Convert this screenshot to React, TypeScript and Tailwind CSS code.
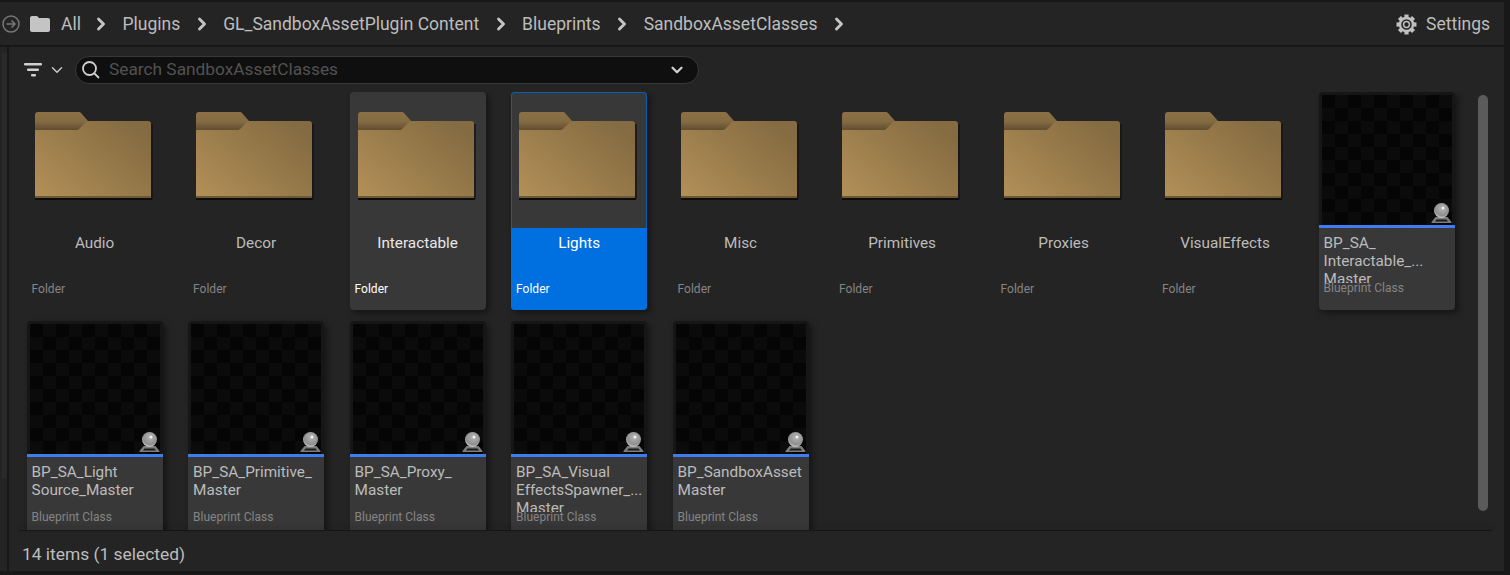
import { useId } from "react"
import { ChevronDown, ChevronRight } from "lucide-react"

const crumbs = ["Plugins", "GL_SandboxAssetPlugin Content", "Blueprints", "SandboxAssetClasses"]
const folders = ["Audio", "Decor", "Interactable", "Lights", "Misc", "Primitives", "Proxies", "VisualEffects"]
const blueprints = [
  ["BP_SA_", "Interactable_...", "Master"],
  ["BP_SA_Light", "Source_Master"],
  ["BP_SA_Primitive_", "Master"],
  ["BP_SA_Proxy_", "Master"],
  ["BP_SA_Visual", "EffectsSpawner_...", "Master"],
  ["BP_SandboxAsset", "Master"],
]

function FolderArt() {
  const id = useId()
  return (
    <svg width="118" height="89" viewBox="0 0 118 89" className="block">
      <defs>
        <linearGradient id={id} x1="0" y1="1" x2="1" y2="0.25">
          <stop offset="0" stopColor="#b39058" />
          <stop offset="1" stopColor="#846b41" />
        </linearGradient>
        <linearGradient id={id + "t"} x1="0" y1="0" x2="0" y2="1">
          <stop offset="0" stopColor="#8c7146" />
          <stop offset="0.5" stopColor="#846b42" />
          <stop offset="1" stopColor="#5c4a2e" />
        </linearGradient>
      </defs>
      <path d="M0 19V3a3 3 0 0 1 3-3h41a3 3 0 0 1 2 1l7 8-9 10z" fill={`url(#${id}t)`} />
      <path d="M0 18h42a3 3 0 0 0 2-1l7-7a3 3 0 0 1 2-1h60a3 3 0 0 1 3 3v74H0z" fill={`url(#${id})`} />
      <path d="M0 84h116v2H0z" fill="#6f5934" />
      <path d="M0 87h117" stroke="#0c0c0c" strokeWidth="2" />
      <path d="M117 12v75" stroke="#141414" strokeWidth="1.500" />
    </svg>
  )
}

function LightIcon() {
  return (
    <svg width="21" height="21" viewBox="0 0 21 21" className="block">
      <defs>
        <radialGradient id="sphere" cx="0.55" cy="0.35" r="0.7">
          <stop offset="0" stopColor="#b5b5b5" />
          <stop offset="0.7" stopColor="#8f8f8f" />
          <stop offset="1" stopColor="#dedede" />
        </radialGradient>
      </defs>
      <path d="M4.500 15L0.500 20v1h20v-1l-4-5z" fill="#7d7d7d" />
      <path d="M5.500 17.500h10l1.500 2H4z" fill="#1a1a1a" />
      <circle cx="10.500" cy="8.500" r="7.500" fill="url(#sphere)" />
      <circle cx="12" cy="6" r="1.500" fill="#f2f2f2" />
    </svg>
  )
}

function GearIcon() {
  return (
    <svg width="21" height="21" viewBox="0 0 20 20" className="block text-[#c0c0c0]" fill="none" stroke="currentColor">
      {[0, 45, 90, 135, 180, 225, 270, 315].map((a) => (
        <rect key={a} x="8" y="0.500" width="4" height="4" fill="currentColor" stroke="none" transform={`rotate(${a} 10 10)`} />
      ))}
      <circle cx="10" cy="10" r="6.200" strokeWidth="2.400" />
      <circle cx="10" cy="10" r="2.800" strokeWidth="1.400" />
    </svg>
  )
}

function FolderCard({ name }: { name: string }) {
  const hovered = name === "Interactable"
  const selected = name === "Lights"
  const active = hovered || selected
  return (
    <div className={`relative h-[218px] w-[136px] rounded-[4px] ${active ? "bg-[#383838] shadow-[3px_3px_6px_rgba(0,0,0,0.45)]" : ""} ${selected ? "ring-1 ring-inset ring-[#0a5fb4]" : ""}`}>
      <div className="h-[136px] pt-[20px] pl-[8px]">
        <FolderArt />
      </div>
      <div className={`absolute inset-x-0 bottom-0 h-[82px] rounded-b-[4px] ${selected ? "bg-[#006fe0]" : ""}`}>
        <div className={`pt-[6px] text-center text-[15.300px] leading-[18px] ${selected ? "text-white" : active ? "text-[#e8e8e8]" : "text-[#bcbcbc]"}`}>{name}</div>
        <div className={`absolute bottom-[14px] left-[5px] text-[12px] leading-[14px] ${active ? "text-white" : "text-[#858585]"}`}>Folder</div>
      </div>
    </div>
  )
}

function BlueprintCard({ lines }: { lines: string[] }) {
  return (
    <div className="h-[218px] w-[136px] rounded-[4px] bg-[#161616] shadow-[3px_3px_6px_rgba(0,0,0,0.45)]">
      <div className="px-[3px] pt-[3px]">
        <div className="relative h-[130px] bg-[#050505] bg-[repeating-conic-gradient(#0b0b0b_0_25%,#050505_0_50%)] bg-[length:26px_26px]">
          <div className="absolute right-0 bottom-[2px]">
            <LightIcon />
          </div>
        </div>
      </div>
      <div className="h-[3px] bg-[#3f7cf0]" />
      <div className="h-[82px] rounded-b-[4px] bg-[#383838] px-[5px] pt-[6px]">
        <div className="h-[49px] overflow-hidden text-[15.300px] leading-[18px] whitespace-nowrap text-[#bcbcbc]">
          {lines.map((l) => (
            <div key={l}>{l}</div>
          ))}
        </div>
        <div className="-mt-[2px] text-[12px] leading-[14px] text-[#858585]">Blueprint Class</div>
      </div>
    </div>
  )
}

export default function App() {
  return (
    <div className="flex h-[575px] w-[1510px] flex-col overflow-hidden bg-[#181818] pt-[2px] pb-[4px] font-['Roboto',sans-serif]">
      {/* Breadcrumb bar */}
      <div className="mr-[6px] flex h-[45px] items-center border-b-2 border-[#171717] bg-[#242424] pt-[1px] pr-[14px] pl-[2px] text-[17.500px] text-[#bdbdbd]">
        <svg width="18" height="18" viewBox="0 0 18 18" fill="none" stroke="#777" strokeWidth="1.500">
          <circle cx="9" cy="9" r="8" />
          <path d="M4.500 9h8M9.500 5.500L13 9l-3.500 3.500" />
        </svg>
        <svg width="20" height="16" viewBox="0 0 20 16" className="ml-[10px]" fill="#c4c4c4">
          <path d="M0 2a2 2 0 0 1 2-2h5l2 2h9a2 2 0 0 1 2 2v10a2 2 0 0 1-2 2H2a2 2 0 0 1-2-2z" />
        </svg>
        <span className="ml-[11px] -mr-[1.500px]">All</span>
        {crumbs.map((c) => (
          <div key={c} className="flex items-center">
            <ChevronRight size={20} strokeWidth={3.500} className="mx-[11.500px] text-[#c4c4c4]" />
            <span>{c}</span>
          </div>
        ))}
        <ChevronRight size={20} strokeWidth={3.500} className="mx-[11.500px] text-[#c4c4c4]" />
        <div className="ml-auto flex items-center gap-[9px]">
          <GearIcon />
          <span>Settings</span>
        </div>
      </div>

      <div className="flex min-h-0 flex-1">
        {/* Collapsed side strip */}
        <div className="w-[9px] border-r-2 border-[#171717] bg-[#242424]">
          <div className="mt-[6px] ml-[2px] h-[425px] bg-[#2a2a2a]" />
        </div>

        <div className="flex min-w-0 flex-1 flex-col bg-[#242424]">
          {/* Filter and search */}
          <div className="flex h-[45px] items-center pl-[15px]">
            <svg width="20" height="16" viewBox="0 0 20 16" fill="#d0d0d0">
              <rect x="0" y="1" width="18" height="2.500" rx="1" />
              <rect x="3" y="6.500" width="12" height="2.500" rx="1" />
              <rect x="7" y="12" width="5" height="2.500" rx="1" />
            </svg>
            <ChevronDown size={18} strokeWidth={2} className="ml-[4px] text-[#c8c8c8]" />
            <div className="ml-[9px] flex h-[28px] w-[624px] items-center rounded-full border border-[#383838] bg-[#0f0f0f] pr-[12px] pl-[5px]">
              <svg width="20" height="20" viewBox="0 0 20 20" fill="none" stroke="#d0d0d0" strokeWidth="1.800">
                <circle cx="8.500" cy="8.500" r="6.500" />
                <path d="M13.500 13.500L18 18" />
              </svg>
              <span className="ml-[8px] text-[17.300px] text-[#525252]">Search SandboxAssetClasses</span>
              <ChevronDown size={18} strokeWidth={3} className="ml-auto text-[#d0d0d0]" />
            </div>
          </div>

          {/* Asset grid */}
          <div className="flex min-h-0 flex-1">
            <div className="grid min-w-0 flex-1 grid-cols-[repeat(9,136px)] content-start gap-x-[25.500px] gap-y-[11px] overflow-hidden pl-[17.600px]">
              {folders.map((f) => (
                <FolderCard key={f} name={f} />
              ))}
              {blueprints.map((b) => (
                <BlueprintCard key={b.join("")} lines={b} />
              ))}
            </div>
            <div className="mr-[16px] ml-[2px] w-[10px] pt-[3px] pb-[19px]">
              <div className="h-full rounded-full bg-[#5b5b5b]" />
            </div>
          </div>

          {/* Status bar */}
          <div className="h-[41px]">
            <div className="relative z-10 mr-[12px] ml-[10px] h-[1px] bg-[#161616] shadow-[0_-3px_4px_rgba(0,0,0,0.35)]" />
            <div className="pt-[11px] pl-[13px] text-[17.400px] leading-[24px] text-[#bdbdbd]">14 items (1 selected)</div>
          </div>
        </div>

        <div className="w-[6px] bg-[#181818]" />
      </div>
    </div>
  )
}
